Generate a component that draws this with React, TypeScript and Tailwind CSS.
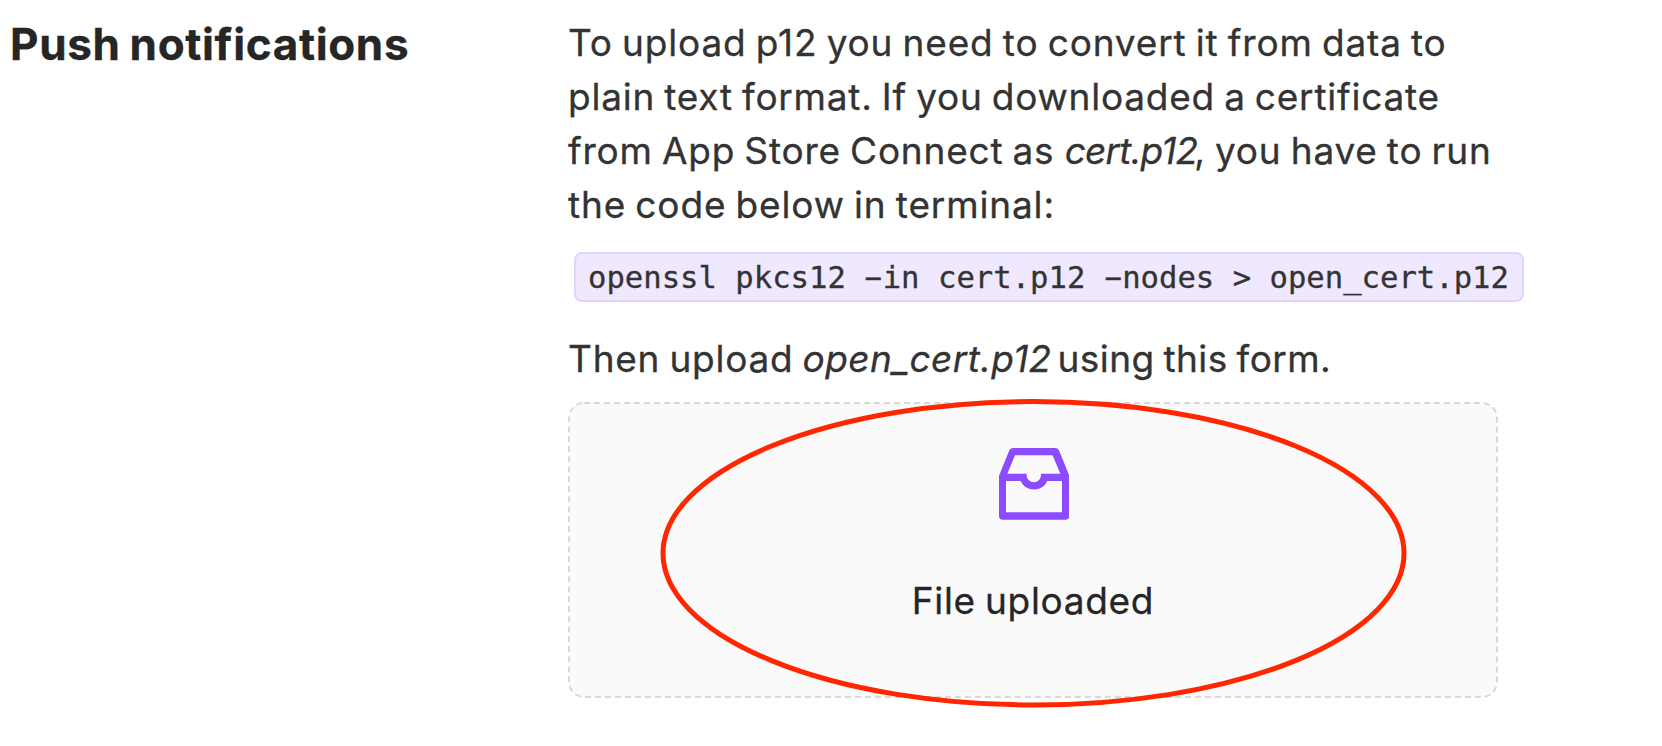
import type { ReactNode } from "react";

function InboxIcon() {
  return (
    <svg viewBox="0 0 211 215" className="ml-0.5 h-[71.7px] w-[70.3px]" fill="#8c4bff" fillRule="evenodd" aria-hidden="true">
      <path d="M42 0H168Q176 0 180 7L211 83V204Q211 215 200 215H11Q0 215 0 204V83L31 7Q35 0 42 0ZM48 22L25 77H83V82A21.5 21 0 0 0 126 82V77H184L161 22ZM21 99V193H189V99H145A44 44 0 0 1 65 99Z" />
    </svg>
  );
}

function Dash() {
  return (
    <span className="inline-flex w-[18.42px] justify-center font-['Liberation_Sans',sans-serif] leading-none">
      <span className="inline-block origin-center -translate-y-px scale-x-[1.95]">-</span>
    </span>
  );
}

function Line({ className, children }: { className: string; children: ReactNode }) {
  return <span className={`block whitespace-nowrap ${className}`}>{children}</span>;
}

export default function App() {
  return (
    <main className="flex h-[746px] w-[1662px] overflow-hidden bg-white font-['Inter',sans-serif] text-[37px] leading-[54px] [word-spacing:-2px] text-[#333333] [-webkit-text-stroke:0.3px_currentColor]">
      <aside className="w-[568px] shrink-0 pt-[17px] pl-[10px]">
        <h1 className="text-[44px] leading-[54px] font-bold tracking-[0.65px] whitespace-nowrap text-[#262626]">
          Push notifications
        </h1>
      </aside>

      <section className="flex flex-col items-start pt-4">
        <p>
          <Line className="tracking-[0.84px]">To upload p12 you need to convert it from data to</Line>
          <Line className="tracking-[0.77px]">plain text format. If you downloaded a certificate</Line>
          <Line className="tracking-[0.79px]">
            from App Store Connect as <em className="ml-px tracking-[-0.77px]">cert.p12</em>
            <span className="-ml-[3px] tracking-[0.8px]">, you have to run</span>
          </Line>
          <Line className="tracking-[0.85px]">the code below in terminal:</Line>
        </p>

        <code className="mt-5 ml-1.5 flex h-[50px] w-[950px] items-center rounded-lg border-2 border-[#e0d4ff] bg-[#f0e8ff] pt-0.5 pl-3 font-['DejaVu_Sans_Mono',monospace] text-[30.6px] leading-[44px] [word-spacing:0px] whitespace-pre">
          <span>
            openssl pkcs12 <Dash />in cert.p12 <Dash />nodes &gt; open_cert.p12
          </span>
        </code>

        <p className="mt-[30px] tracking-[0.76px] whitespace-nowrap">
          Then upload <em className="tracking-[0.4px]">open_cert.p12</em>
          <span className="-ml-[3px] tracking-[0.45px]"> using this form.</span>
        </p>

        <div className="relative mt-4 h-[296px] w-[930px]">
          <svg className="absolute inset-0 h-full w-full" fill="none" aria-hidden="true">
            <rect x="1" y="1" width="928" height="294" rx="15" fill="#fafafa" stroke="#d9d9d9" strokeWidth="2" strokeDasharray="6 4" />
          </svg>
          <div className="relative flex h-full flex-col items-center pt-[46px]">
            <InboxIcon />
            <p className="mt-[54px] tracking-[0.69px] text-[#262626]">File uploaded</p>
          </div>
          <svg className="absolute -top-1 left-[92px] h-[312px] w-[748px]" viewBox="0 0 748 312" fill="none" aria-hidden="true">
            <ellipse cx="373.5" cy="155.3" rx="370.5" ry="151.7" stroke="#ff2600" strokeWidth="5" />
          </svg>
        </div>
      </section>
    </main>
  );
}
